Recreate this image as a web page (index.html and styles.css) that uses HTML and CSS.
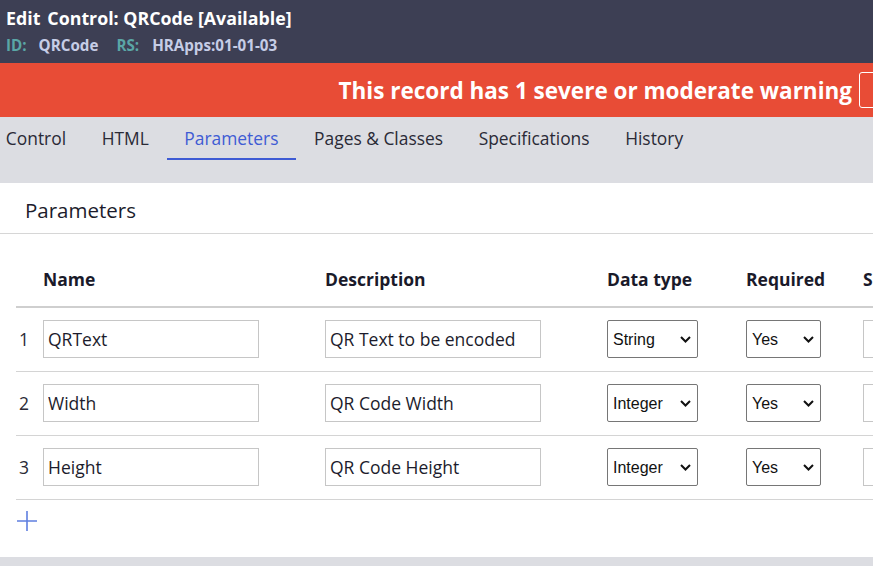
FILE: index.html
```html
<!DOCTYPE html>
<html>
<head>
<meta charset="utf-8">
<link rel="stylesheet" href="styles.css">
</head>
<body>
<header class="hdr">
  <div class="hdr-title"><span class="edit">Edit</span><span>Control: QRCode [Available]</span></div>
  <div class="hdr-meta">
    <span class="lbl">ID:</span><span class="val">QRCode</span>
    <span class="lbl rs">RS:</span><span class="val">HRApps:01-01-03</span>
  </div>
</header>
<div class="warn">
  <span class="warn-text">This record has 1 severe or moderate warning</span>
  <span class="warn-btn"></span>
</div>
<nav class="tabs">
  <span class="tab">Control</span>
  <span class="tab">HTML</span>
  <span class="tab active">Parameters</span>
  <span class="tab">Pages &amp; Classes</span>
  <span class="tab">Specifications</span>
  <span class="tab">History</span>
</nav>
<main class="panel">
  <h2 class="panel-title">Parameters</h2>
  <table class="grid">
    <colgroup>
      <col class="c-num"><col class="c-name"><col class="c-desc"><col class="c-type"><col class="c-req"><col class="c-s">
    </colgroup>
    <thead>
      <tr><th></th><th>Name</th><th>Description</th><th>Data type</th><th>Required</th><th>S</th></tr>
    </thead>
    <tbody>
      <tr>
        <td class="num">1</td>
        <td><input class="txt" value="QRText"></td>
        <td><input class="txt" value="QR Text to be encoded"></td>
        <td><span class="selwrap sw-type"><select class="sel"><option>String</option><option>Integer</option></select><svg class="chev" width="11" height="7" viewBox="0 0 11 7"><path d="M1 1l4.5 4.5L10 1" stroke="#111" stroke-width="2" fill="none"/></svg></span></td>
        <td><span class="selwrap sw-req"><select class="sel"><option>Yes</option><option>No</option></select><svg class="chev" width="11" height="7" viewBox="0 0 11 7"><path d="M1 1l4.5 4.5L10 1" stroke="#111" stroke-width="2" fill="none"/></svg></span></td>
        <td><input class="txt stub"></td>
      </tr>
      <tr>
        <td class="num">2</td>
        <td><input class="txt" value="Width"></td>
        <td><input class="txt" value="QR Code Width"></td>
        <td><span class="selwrap sw-type"><select class="sel"><option>Integer</option><option>String</option></select><svg class="chev" width="11" height="7" viewBox="0 0 11 7"><path d="M1 1l4.5 4.5L10 1" stroke="#111" stroke-width="2" fill="none"/></svg></span></td>
        <td><span class="selwrap sw-req"><select class="sel"><option>Yes</option><option>No</option></select><svg class="chev" width="11" height="7" viewBox="0 0 11 7"><path d="M1 1l4.5 4.5L10 1" stroke="#111" stroke-width="2" fill="none"/></svg></span></td>
        <td><input class="txt stub"></td>
      </tr>
      <tr>
        <td class="num">3</td>
        <td><input class="txt" value="Height"></td>
        <td><input class="txt" value="QR Code Height"></td>
        <td><span class="selwrap sw-type"><select class="sel"><option>Integer</option><option>String</option></select><svg class="chev" width="11" height="7" viewBox="0 0 11 7"><path d="M1 1l4.5 4.5L10 1" stroke="#111" stroke-width="2" fill="none"/></svg></span></td>
        <td><span class="selwrap sw-req"><select class="sel"><option>Yes</option><option>No</option></select><svg class="chev" width="11" height="7" viewBox="0 0 11 7"><path d="M1 1l4.5 4.5L10 1" stroke="#111" stroke-width="2" fill="none"/></svg></span></td>
        <td><input class="txt stub"></td>
      </tr>
    </tbody>
  </table>
  <div class="add">
    <svg width="22" height="22" viewBox="0 0 22 22"><path d="M11 1v20M1 11h20" stroke="#5f7fe0" stroke-width="1.6" fill="none"/></svg>
  </div>
</main>
<div class="band"></div>
</body>
</html>
```
FILE: styles.css
```css
html, body { margin: 0; padding: 0; }
body {
  width: 873px;
  height: 571px;
  overflow: hidden;
  font-family: "Open Sans", "Liberation Sans", sans-serif;
  background: #fff;
  color: #1c1c2c;
}
.hdr {
  background: #3d3f54;
  height: 63px;
  box-sizing: border-box;
  padding: 6px 0 0 6px;
}
.hdr-title {
  color: #fff;
  font-weight: 700;
  font-size: 17.8px;
  line-height: 24px;
  display: flex;
  gap: 7px;
}
.hdr-meta {
  font-size: 15.2px;
  font-weight: 700;
  line-height: 20px;
  margin-top: 5px;
  display: flex;
}
.hdr-meta .lbl { color: #5aa6a6; margin-right: 12px; }
.hdr-meta .val { color: #c6cde6; }
.hdr-meta .rs { margin-left: 18px; margin-right: 13px; }
.warn {
  background: #e84c36;
  height: 54px;
  display: flex;
  justify-content: flex-end;
  align-items: center;
  margin-right: -20px;
}
.warn-text {
  color: #fff;
  font-weight: 700;
  font-size: 22.5px;
}
.warn-btn {
  width: 32px;
  height: 34px;
  border: 1.5px solid #fff;
  border-radius: 3px;
  margin-left: 7px;
}
.tabs {
  background: #dcdde2;
  height: 66px;
  display: flex;
  align-items: flex-start;
  margin-left: -12px;
}
.tab {
  font-size: 17.4px;
  color: #2a2a36;
  padding: 9px 17.8px 0;
  height: 32px;
  line-height: 24px;
}
.tab.active {
  color: #3e5bd4;
  border-bottom: 2px solid #3e5bd4;
}
.panel {
  background: #fff;
  height: 374px;
}
.panel-title {
  margin: 0;
  font-size: 20.5px;
  font-weight: 400;
  color: #1c1c2c;
  height: 51px;
  line-height: 54px;
  padding-left: 25px;
  border-bottom: 1px solid #d6d6d6;
  box-sizing: border-box;
}
.grid {
  margin-left: 16px;
  border-collapse: collapse;
  table-layout: fixed;
  width: 880px;
}
.c-num { width: 27px; }
.c-name { width: 282px; }
.c-desc { width: 282px; }
.c-type { width: 139px; }
.c-req { width: 117px; }
.c-s { width: 33px; }
.grid th {
  text-align: left;
  font-size: 17.5px;
  font-weight: 700;
  color: #1a1a2a;
  height: 73px;
  vertical-align: bottom;
  padding: 0 0 15px 0;
  box-sizing: border-box;
  border-bottom: 2px solid #cfcfcf;
  white-space: nowrap;
  overflow: hidden;
}
.grid td {
  height: 64px;
  padding: 0;
  box-sizing: border-box;
  border-bottom: 1px solid #d4d4d4;
  vertical-align: middle;
}
.grid td.num {
  font-size: 17.5px;
  padding-left: 3px;
  color: #2a2a36;
}
.txt {
  width: 216px;
  height: 38px;
  box-sizing: border-box;
  border: 1px solid #c6c6c6;
  border-radius: 0;
  font-family: "Open Sans", sans-serif;
  font-size: 17.5px;
  color: #1c1c2c;
  padding: 0 4px;
  margin: 0;
  outline: none;
  display: block;
}
.txt.stub { width: 40px; }
.selwrap {
  position: relative;
  display: block;
  height: 38px;
}
.sw-type { width: 91px; }
.sw-req { width: 75px; }
.sel {
  appearance: none;
  -webkit-appearance: none;
  width: 100%;
  height: 38px;
  box-sizing: border-box;
  border: 1px solid #767676;
  border-radius: 2px;
  background: #fff;
  font-family: "Liberation Sans", Arial, sans-serif;
  font-size: 16px;
  color: #111;
  padding: 0 5px;
  margin: 0;
  display: block;
}
.chev {
  position: absolute;
  right: 7px;
  top: 16px;
  pointer-events: none;
}
.add {
  padding: 10px 0 0 16px;
  height: 28px;
}
.add svg { display: block; }
.band {
  height: 9px;
  background: #dcdde2;
}
```
